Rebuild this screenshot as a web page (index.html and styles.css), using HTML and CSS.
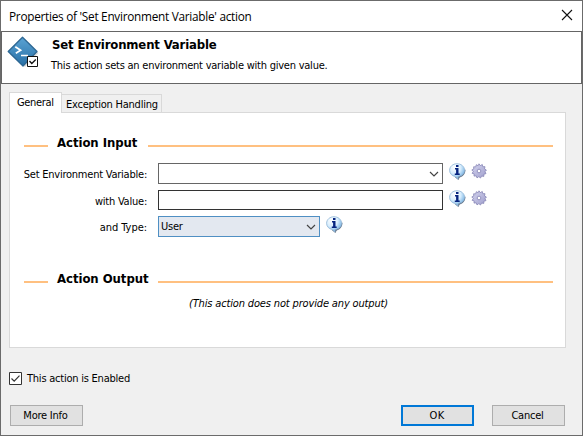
FILE: index.html
```
<!DOCTYPE html>
<html lang="en">
<head>
<meta charset="utf-8">
<title>Set Environment Variable</title>
<link rel="stylesheet" href="styles.css">
</head>
<body>
<svg width="0" height="0" class="defs">
  <defs>
    <linearGradient id="blue" x1="0" y1="0" x2="0" y2="1"><stop offset="0" stop-color="#5aa3d4"/><stop offset="1" stop-color="#286fa5"/></linearGradient>
    <radialGradient id="bubble" cx=".35" cy=".25" r=".8"><stop offset="0" stop-color="#fff"/><stop offset=".5" stop-color="#d7edfd"/><stop offset="1" stop-color="#64a6dd"/></radialGradient>
    <linearGradient id="steel" x1="0" y1="0" x2="1" y2="1"><stop offset="0" stop-color="#d4d4ee"/><stop offset="1" stop-color="#a09fcd"/></linearGradient>
    <symbol id="info" viewBox="0 0 17 17">
      <path d="M6 14.2 9.4 17l1.300-2.600C14 13.600 16.500 11 16.500 6.500" fill="#41536b" opacity=".85"/>
      <path d="M8 .7C3.800.7.600 3.600.600 7.300c0 3.300 2.400 5.600 5.600 6.200L9 16v-2.500c4-.3 6.600-2.800 6.600-6.200C15.600 3.600 12.200.7 8 .7z" fill="url(#bubble)" stroke="#8fb5d6" stroke-width=".8"/>
      <path d="M7 2h2.500v2H7zM6 5h3.500v5.500h1.200V12H5.800v-1.500h1.300v-4H6z" fill="#07247f"/>
    </symbol>
    <symbol id="gear" viewBox="0 0 16 16">
      <path d="M8 .8 9.300 2.600 11.300 1.500 11.800 3.700 14 3.700 13.500 5.900 15.400 7 14 8.700 15 10.600 12.900 11.200 12.800 13.400 10.600 13 9.500 15 7.800 13.600 6 14.900 5.200 12.800 3 13.100 3.200 10.900 1.100 10.300 2.300 8.500.8 6.900 2.800 6 2.600 3.800 4.700 3.900 5.300 1.700 7.100 2.700z" fill="url(#steel)" stroke="#8584b5" stroke-width=".8"/>
      <circle cx="8" cy="8" r="1.800" fill="#fff" stroke="#8584b5" stroke-width=".8"/>
    </symbol>
    <symbol id="chevron" viewBox="0 0 10 6"><path d="M1 1l4 4 4-4" fill="none" stroke="#444" stroke-width="1.150"/></symbol>
  </defs>
</svg>
<main class="window">
  <div class="titlebar">
    <span class="caption">Properties of 'Set Environment Variable' action</span>
    <svg class="close" viewBox="0 0 10 10"><path d="M0 0l10 10M10 0L0 10" stroke="#111" stroke-width="1.100"/></svg>
  </div>
  <header class="banner">
    <svg class="logo" viewBox="0 0 32 32">
      <path d="M17 3.500 31.500 17 18 31 3 18z" fill="#999" opacity=".35"/>
      <path d="M15.500 1.300 30 15.500 16 30 1.200 15.500z" fill="url(#blue)" stroke="#2d6793" stroke-width="1.300" stroke-linejoin="round"/>
      <path d="M8.300 10.800l5.300 3.500-4.800 3M14 19.500h7" fill="none" stroke="#fff" stroke-width="1.700"/>
      <path d="M20.500 20.500h10v10h-10z" fill="#fff" stroke="#111"/>
      <path d="M22.500 25l2.300 2.500 4-4" fill="none" stroke="#111" stroke-width="1.300"/>
    </svg>
    <div>
      <h1>Set Environment Variable</h1>
      <p>This action sets an environment variable with given value.</p>
    </div>
  </header>
  <nav class="tabs">
    <div class="tab active"><span>General</span></div>
    <div class="tab other"><span>Exception Handling</span></div>
  </nav>
  <section class="page">
    <div class="rule"><i class="dash"></i><h2 class="t-input">Action Input</h2><i class="line"></i></div>
    <div class="row first"><label>Set Environment Variable:</label><div class="field combo"><svg class="chev"><use href="#chevron"/></svg></div><svg class="info"><use href="#info"/></svg><svg class="gear"><use href="#gear"/></svg></div>
    <div class="row second"><label>with Value:</label><div class="field text"></div><svg class="info"><use href="#info"/></svg><svg class="gear"><use href="#gear"/></svg></div>
    <div class="row third"><label class="t-type">and Type:</label><div class="field select"><span class="t-user">User</span><svg class="chev"><use href="#chevron"/></svg></div><svg class="info"><use href="#info"/></svg></div>
    <div class="rule output"><i class="dash"></i><h2 class="t-output">Action Output</h2><i class="line"></i></div>
    <p class="note">(This action does not provide any output)</p>
  </section>
  <div class="enabled">
    <svg class="check" viewBox="0 0 13 13"><path d="M.5.5h12v12H.5z" fill="#fff" stroke="#333"/><path d="M2.500 6.500l2.700 2.700 5.300-5.500" fill="none" stroke="#333" stroke-width="1.200"/></svg>
    <span>This action is Enabled</span>
  </div>
  <footer class="buttons">
    <button class="more">More Info</button>
    <button class="ok">OK</button>
    <button class="cancel">Cancel</button>
  </footer>
</main>
</body>
</html>
```
FILE: styles.css
```
* { box-sizing: border-box; margin: 0; padding: 0; }
body { width: 583px; height: 436px; overflow: hidden; font: 11px/14px "DejaVu Sans Condensed", "DejaVu Sans", sans-serif; letter-spacing: -.23px; color: #000; }
svg { display: block; flex: none; }
span, label, h2 { white-space: nowrap; }
.defs { position: absolute; }
.window { width: 583px; height: 436px; border: 1px solid #6b6b6b; background: #f0f0f0; }
.titlebar { height: 30px; background: #fff; display: flex; align-items: center; justify-content: space-between; padding: 0 10px 1px 8px; font: 11.8px/16px "Open Sans", "Noto Sans", sans-serif; letter-spacing: -.27px; }
.close { width: 10px; height: 10px; overflow: visible; margin-bottom: 1px; }
.banner { height: 53px; border: 1px solid #656565; background: #fff; display: flex; padding: 4px 0 0 5px; }
.logo { width: 32px; height: 32px; }
.banner div { padding: 1px 0 0 12px; }
h1 { font-size: 13px; line-height: 16px; letter-spacing: -.16px; padding-left: 1px; }
.banner p { margin-top: 6px; }
.tabs { display: flex; align-items: flex-end; height: 28px; padding-left: 8px; }
.tab { border: 1px solid #d9d9d9; border-bottom: 0; }
.active { width: 53px; height: 21px; margin-bottom: -1px; background: #fff; padding: 3px 0 0 7px; z-index: 1; letter-spacing: -.35px; }
.other { width: 100px; height: 18px; border-left: 0; padding: 3px 0 0 4px; }
.page { width: 557px; height: 236px; margin-left: 8px; background: #fff; border: 1px solid #d9d9d9; padding: 22px 12px 0 14px; }
.rule { display: flex; align-items: center; height: 16px; }
.rule i { height: 2px; margin-top: 6px; background: #ffc080; }
.dash { width: 24px; margin-right: 9px; }
.line { flex: 1; }
h2 { font-size: 13px; line-height: 16px; letter-spacing: -.05px; }
.t-input { width: 91px; }
.t-output { width: 101px; }
.row { display: flex; align-items: flex-start; }
.first { margin-top: 12px; height: 27px; }
.second { height: 26px; }
.third { height: 28px; }
.row label { width: 134px; padding: 5px 11px 0 0; display: flex; justify-content: flex-end; }
.row .t-type { letter-spacing: -.05px; }
.field { display: flex; align-items: center; justify-content: space-between; height: 21px; border: 1px solid #666; padding: 0 3px 0 2px; background: #fff; }
.combo { width: 285px; justify-content: flex-end; }
.text { width: 285px; height: 20px; border-color: #333; }
.select { width: 162px; border-color: #4f8fc3; background: #e3e8f0; }
.t-user { padding-top: 1px; }
.chev { width: 10px; height: 6px; margin-top: 1px; }
.info { width: 17px; height: 17px; margin-left: 6px; }
.gear { width: 16px; height: 16px; margin-left: 5px; }
.output { margin-top: 27px; }
.note { text-align: center; font-style: italic; letter-spacing: -.15px; margin-top: 10px; }
.enabled { display: flex; align-items: center; height: 15px; margin: 23px 0 0 8px; gap: 5px; }
.enabled span { padding-top: 1px; }
.check { width: 13px; height: 13px; }
.buttons { display: flex; padding: 19px 0 0 9px; }
button { width: 73px; height: 21px; border: 1px solid #adadad; background: #e1e1e1; font: inherit; letter-spacing: inherit; color: inherit; padding-top: 1px; text-align: center; }
.more { padding-right: 2px; }
.ok { margin-left: 318px; border: 2px solid #0078d7; padding-right: 1px; letter-spacing: .3px; }
.cancel { margin-left: 18px; padding-right: 2px; }
```
